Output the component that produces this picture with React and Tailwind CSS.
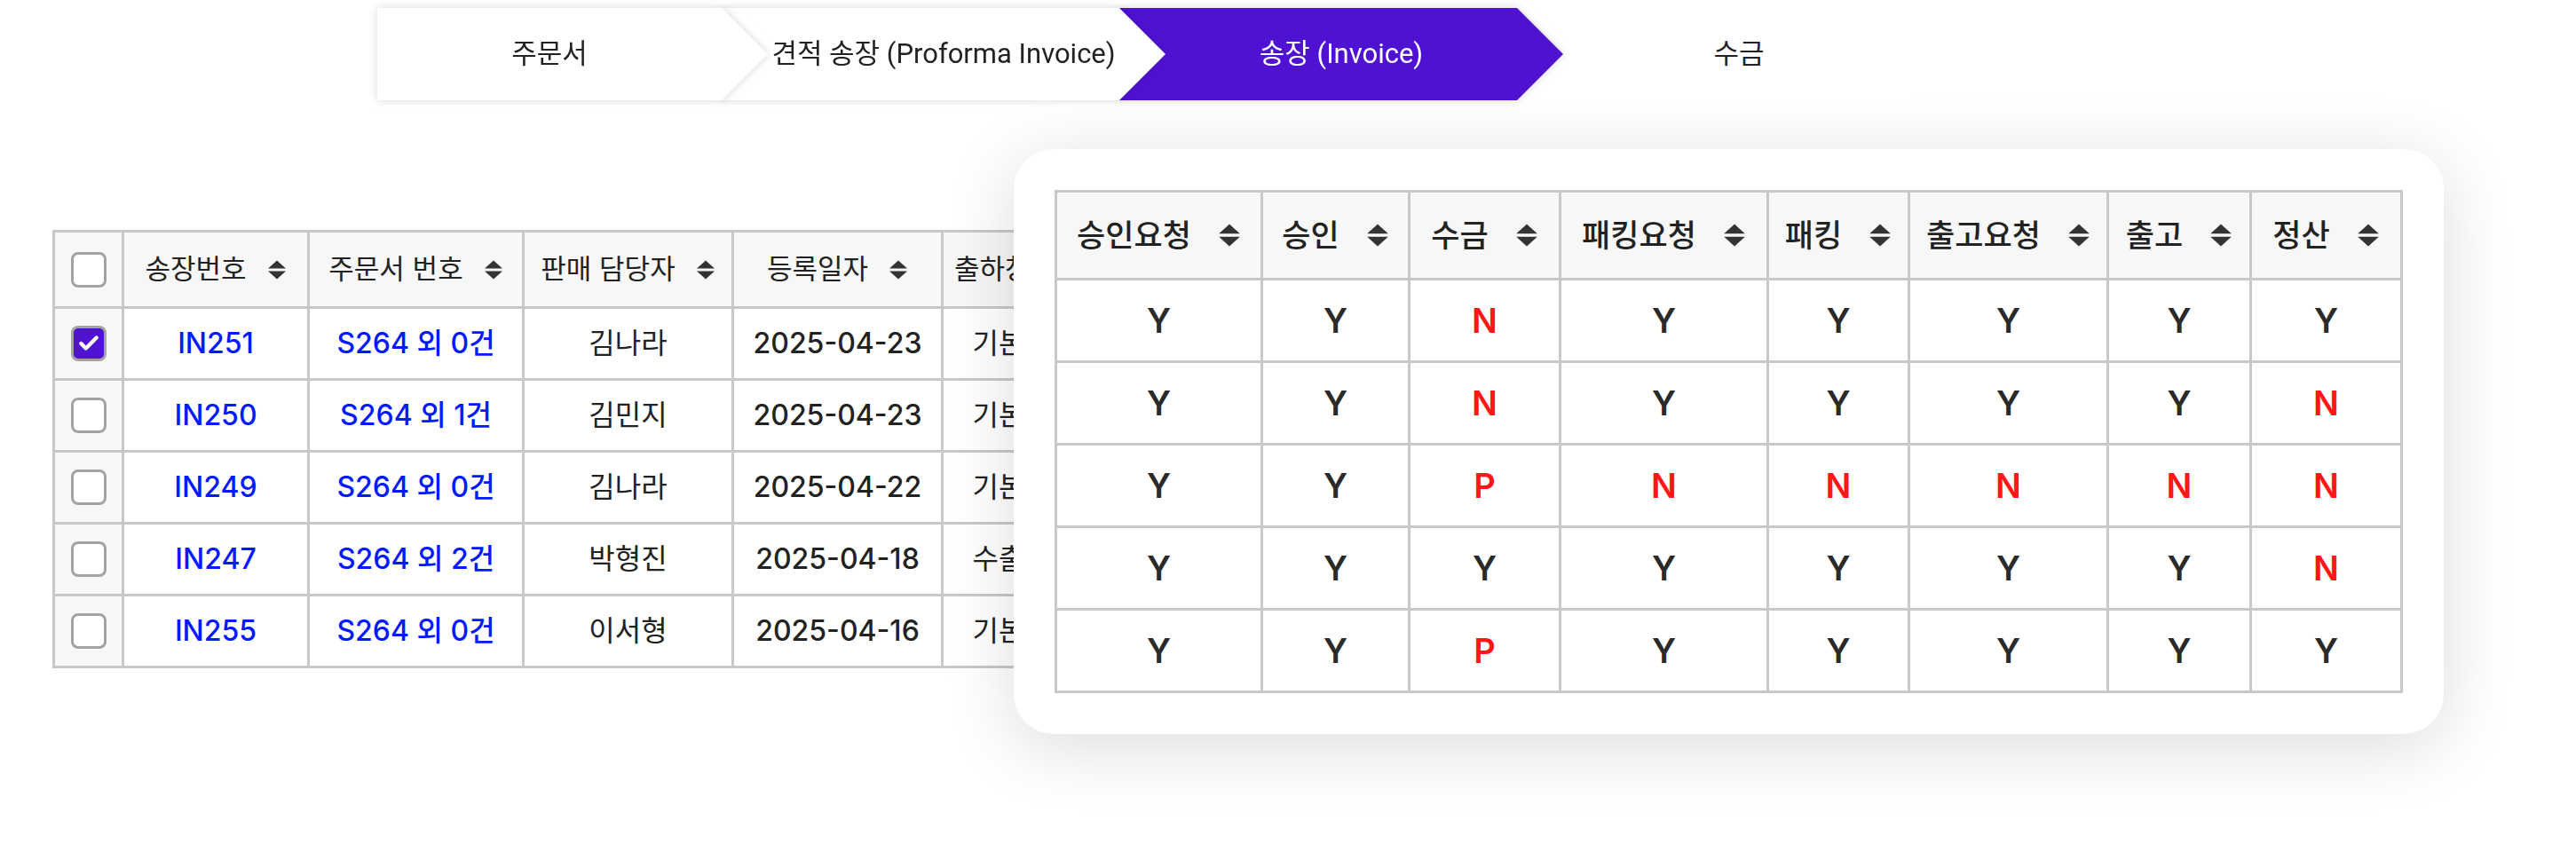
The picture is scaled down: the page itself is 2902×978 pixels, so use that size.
import { Check } from 'lucide-react'

const steps = [
  { label: '주문서', active: false },
  { label: '견적 송장 (Proforma Invoice)', active: false },
  { label: '송장 (Invoice)', active: true },
  { label: '수금', active: false, last: true },
]

const invoices = [
  { checked: true, no: 'IN251', order: 'S264 외 0건', owner: '김나라', date: '2025-04-23', ship: '기본창고' },
  { checked: false, no: 'IN250', order: 'S264 외 1건', owner: '김민지', date: '2025-04-23', ship: '기본창고' },
  { checked: false, no: 'IN249', order: 'S264 외 0건', owner: '김나라', date: '2025-04-22', ship: '기본창고' },
  { checked: false, no: 'IN247', order: 'S264 외 2건', owner: '박형진', date: '2025-04-18', ship: '수출창고' },
  { checked: false, no: 'IN255', order: 'S264 외 0건', owner: '이서형', date: '2025-04-16', ship: '기본창고' },
]

const statusCols = [
  { label: '승인요청', w: 'w-[232px]' },
  { label: '승인', w: 'w-[166px]' },
  { label: '수금', w: 'w-[170px]' },
  { label: '패킹요청', w: 'w-[234px]' },
  { label: '패킹', w: 'w-[159px]' },
  { label: '출고요청', w: 'w-[224px]' },
  { label: '출고', w: 'w-[161px]' },
  { label: '정산', w: 'w-[170px]' },
]

const statusRows = [
  'YYNYYYYY',
  'YYNYYYYN',
  'YYPNNNNN',
  'YYYYYYYN',
  'YYPYYYYY',
]

const SortIcon = ({ size = 22 }) => (
  <svg width={size} height={size} viewBox="0 0 22 22" className="shrink-0">
    <path d="M1 9.5 L11 0.5 L21 9.5 Z" fill="#333" />
    <path d="M1 12.5 L11 21.5 L21 12.5 Z" fill="#333" />
  </svg>
)

const Checkbox = ({ checked }) => (
  <div
    className={`mx-auto w-[40px] h-[40px] rounded-[8px] border-[3px] border-[#a3a3a3] flex items-center justify-center ${
      checked ? 'bg-[#4f12d3]' : 'bg-white'
    }`}
  >
    {checked && <Check size={26} strokeWidth={4} color="#fff" />}
  </div>
)

const Step = ({ step, index }) => {
  const z = ['z-[4]', 'z-[3]', 'z-[2]', 'z-[1]'][index]
  const first = index === 0

  return (
    <div
      className={`relative ${z} ${first ? '' : '-ml-[52px]'} ${
        step.last ? '' : 'drop-shadow-[0_0_5px_rgba(0,0,0,0.16)]'
      }`}
    >
      <div
        className={`h-[104px] flex items-center justify-center text-[31px] [clip-path:polygon(0_0,calc(100%_-_52px)_0,100%_50%,calc(100%_-_52px)_100%,0_100%)] ${
          first ? 'w-[440px] pr-[52px]' : 'w-[500px] px-[52px]'
        } ${step.active ? 'bg-[#4f12d3] text-white' : 'bg-white text-[#222]'}`}
      >
        {step.label}
      </div>
    </div>
  )
}

const App = () => {
  return (
    <div className="relative w-[2902px] h-[978px] overflow-hidden bg-white font-['Inter','Noto_Sans_CJK_KR',sans-serif]">
      <div className="flex pl-[425px] pt-[9px] font-['Roboto','Noto_Sans_CJK_KR',sans-serif]">
        {steps.map((step, i) => (
          <Step key={step.label} step={step} index={i} />
        ))}
      </div>

      <div className="ml-[59px] mt-[146px]">
        <table className="table-fixed border-collapse border-[3px] border-[#c8c8c8] text-[#222]">
          <colgroup>
            <col className="w-[78px]" />
            <col className="w-[209px]" />
            <col className="w-[242px]" />
            <col className="w-[236px]" />
            <col className="w-[236px]" />
            <col className="w-[186px]" />
          </colgroup>
          <thead>
            <tr className="h-[86px] bg-[#f7f7f7] text-[31px]">
              <th className="border-[3px] border-[#c8c8c8]">
                <Checkbox checked={false} />
              </th>
              {['송장번호', '주문서 번호', '판매 담당자', '등록일자', '출하창고'].map((h) => (
                <th key={h} className="border-[3px] border-[#c8c8c8] font-normal">
                  <div className="flex items-center justify-center gap-[23px]">
                    <span className="whitespace-nowrap">{h}</span>
                    <SortIcon />
                  </div>
                </th>
              ))}
            </tr>
          </thead>
          <tbody>
            {invoices.map((row) => (
              <tr key={row.no} className="h-[81px] text-[32px] font-medium text-center">
                <td className="border-[3px] border-[#c8c8c8] bg-[#f7f7f7]">
                  <Checkbox checked={row.checked} />
                </td>
                <td className="border-[3px] border-[#c8c8c8] text-[#0019ff]">{row.no}</td>
                <td className="border-[3px] border-[#c8c8c8] text-[#0019ff] whitespace-nowrap">{row.order}</td>
                <td className="border-[3px] border-[#c8c8c8] font-normal">{row.owner}</td>
                <td className="border-[3px] border-[#c8c8c8]">{row.date}</td>
                <td className="border-[3px] border-[#c8c8c8] font-normal whitespace-nowrap">{row.ship}</td>
              </tr>
            ))}
          </tbody>
        </table>
      </div>

      {/* status popup over the invoice list */}
      <div className="absolute left-[1142px] top-[168px] rounded-[45px] bg-white p-[46px] shadow-[0_14px_80px_rgba(0,0,0,0.14)]">
        <table className="table-fixed border-collapse border-[3px] border-[#c8c8c8] text-[#222]">
          <colgroup>
            {statusCols.map((c) => (
              <col key={c.label} className={c.w} />
            ))}
          </colgroup>
          <thead>
            <tr className="h-[99px] bg-[#f7f7f7] text-[35px]">
              {statusCols.map((c) => (
                <th key={c.label} className="border-[3px] border-[#c8c8c8] font-medium">
                  <div className="flex items-center justify-center gap-[30px]">
                    <span className="whitespace-nowrap">{c.label}</span>
                    <SortIcon size={26} />
                  </div>
                </th>
              ))}
            </tr>
          </thead>
          <tbody>
            {statusRows.map((row, r) => (
              <tr key={r} className="h-[93px] text-[38px] font-semibold text-center">
                {row.split('').map((v, i) => (
                  <td
                    key={i}
                    className={`border-[3px] border-[#c8c8c8] ${v === 'Y' ? 'text-[#2a2a2a]' : 'text-[#ff1616]'}`}
                  >
                    {v}
                  </td>
                ))}
              </tr>
            ))}
          </tbody>
        </table>
      </div>
    </div>
  )
}

export default App
